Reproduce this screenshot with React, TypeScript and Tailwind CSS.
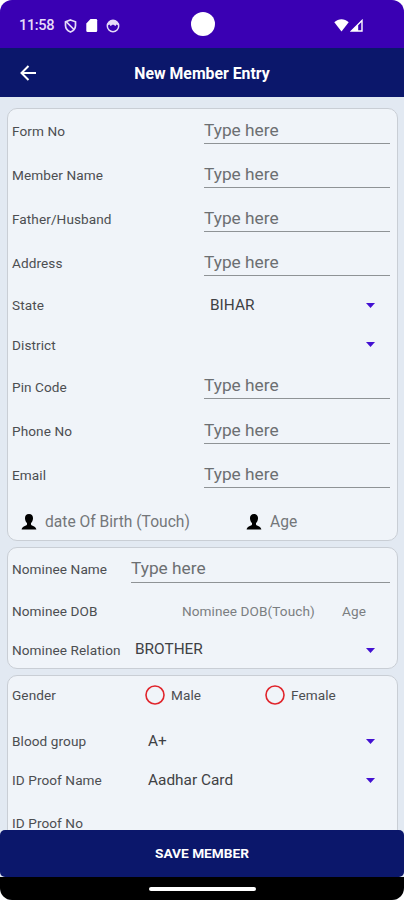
import type { ReactNode } from 'react';
import { clsx } from 'clsx';

const Card = ({ className, children }: { className?: string; children: ReactNode }) => (
  <section
    className={clsx(
      'ml-[7px] mr-[6px] shrink-0 rounded-[10px] border border-[#c9ced5] bg-[#f0f4f9] pl-1 pr-[7px]',
      className,
    )}
  >
    {children}
  </section>
);

const Label = ({
  className,
  muted,
  children,
}: {
  className?: string;
  muted?: boolean;
  children: ReactNode;
}) => (
  <span
    className={clsx(
      'shrink-0 whitespace-nowrap text-[13.6px] tracking-[0.08px]',
      muted ? 'text-[#7b7e81]' : 'text-[#4c4e51]',
      className,
    )}
  >
    {children}
  </span>
);

const Caret = () => (
  <svg className="mr-[15px] h-[5px] w-[9px] shrink-0" viewBox="0 0 9 5">
    <path d="M0 0h9L4.5 5z" fill="#4310d2" />
  </svg>
);

const TextRow = ({ label, wide }: { label: string; wide?: boolean }) => (
  <div className={clsx('flex items-center', wide ? 'h-[43px]' : 'h-[44.2px]')}>
    <Label className={wide ? 'w-[119px]' : 'w-[192px]'}>{label}</Label>
    <div
      className={clsx(
        'flex flex-1 items-center border-b border-[#8f9396] text-[17.3px] text-[#6c6f72]',
        wide ? 'h-[27px]' : 'h-[25px]',
      )}
    >
      Type here
    </div>
  </div>
);

const SelectRow = ({
  label,
  value,
  labelClass,
  className,
}: {
  label: string;
  value?: string;
  labelClass: string;
  className: string;
}) => (
  <div className={clsx('flex items-center', className)}>
    <Label className={labelClass}>{label}</Label>
    <span className="flex-1 text-[15.4px] text-[#3f4144]">{value}</span>
    <Caret />
  </div>
);

const PersonIcon = () => (
  <svg className="h-4 w-4 shrink-0" viewBox="0 0 16 16">
    <path
      d="M8 0C5.2 0 3.8 1.9 4 4.5c.1 1.9.8 3.500 2 4.500v1.400C5.700 11.900 1 12 .6 15.500h14.800C15 12 10.300 11.900 10 10.400V9c1.200-1 1.900-2.600 2-4.500C12.200 1.900 10.800 0 8 0z"
      fill="#000"
    />
  </svg>
);

const Radio = ({ label, className }: { label: string; className?: string }) => (
  <div className={clsx('flex items-center gap-[6px]', className)}>
    <svg className="h-5 w-5" viewBox="0 0 20 20">
      <circle cx="10" cy="10" r="9" fill="none" stroke="#e0242b" strokeWidth="1.6" />
    </svg>
    <Label>{label}</Label>
  </div>
);

const StatusBar = () => (
  <div className="relative flex h-12 shrink-0 items-center bg-[#3a00b3] pl-[19px] pr-[41px] pt-[3px] text-white">
    <span className="w-[45px] text-[14.6px] font-medium tracking-[-0.4px] text-[#e6dcf8]">11:58</span>
    {/* shield */}
    <svg className="h-[14px] w-[13px]" viewBox="0 0 13 14" fill="none" stroke="#e6dcf8" strokeWidth="1.7">
      <path d="M6.500 1L11.500 2.800v3.700c0 2.800-2 5.200-5 6.500-3-1.300-5-3.700-5-6.500V2.800z" />
      <path d="M2 2.500l8.500 8.500" />
    </svg>
    {/* sd card */}
    <svg className="ml-[9px] h-[13px] w-[12px]" viewBox="0 0 12 13">
      <path d="M4.500 0H10a1.200 1.200 0 0 1 1.200 1.200v10.600A1.200 1.200 0 0 1 10 13H1.500A1.200 1.200 0 0 1 .3 11.800V4.500z" fill="#fff" />
    </svg>
    {/* face */}
    <svg className="ml-[8px] h-[14px] w-[14px]" viewBox="0 0 14 14">
      <circle cx="7" cy="7" r="5.700" fill="none" stroke="#e6dcf8" strokeWidth="1.500" />
      <path d="M1.500 4.500L4 2h6l2.500 2.500v2L10.500 5.500 9.500 7 7 5.500 4.500 7 3.500 5.500 1.500 6.500z" fill="#e6dcf8" />
    </svg>
    <div className="absolute left-[191px] top-3 h-6 w-6 rounded-full bg-white" />
    <svg className="ml-auto h-[13px] w-[15px]" viewBox="0 0 15 13">
      <path d="M.3 3.200C4.500-.7 10.500-.7 14.700 3.200L7.500 12.500z" fill="#fff" />
    </svg>
    <svg className="ml-[1px] h-[13px] w-[13px]" viewBox="0 0 13 13" fill="none" stroke="#fff" strokeWidth="1.400">
      <path d="M12 1.500V12H1.500zM7.500 6v6" />
      <path d="M7.500 6L1.500 12h6z" fill="#fff" stroke="none" />
    </svg>
  </div>
);

export default function App() {
  return (
    <div className="h-[900px] w-[404px] overflow-hidden bg-white font-['Roboto',sans-serif]">
      <div className="flex h-full flex-col overflow-hidden rounded-[12px] bg-[#e2e9f2]">
        <StatusBar />

        <header className="relative flex h-[49px] shrink-0 items-center justify-center bg-[#0b176b] pt-[3px] text-white">
          <svg
            className="absolute left-5 top-[17px] h-4 w-4"
            viewBox="0 0 16 16"
            fill="none"
            stroke="#fff"
            strokeWidth="2"
          >
            <path d="M16 8H1.500M8.500 1L1.500 8l7 7" />
          </svg>
          <h1 className="text-[15.8px] font-bold">New Member Entry</h1>
        </header>

        <main className="flex min-h-0 flex-1 flex-col gap-[6px] overflow-hidden pt-[11px]">
          <Card className="h-[433px]">
            <TextRow label="Form No" />
            <TextRow label="Member Name" />
            <TextRow label="Father/Husband" />
            <TextRow label="Address" />
            <SelectRow label="State" value="BIHAR" labelClass="w-[198px]" className="h-[39px]" />
            <SelectRow label="District" labelClass="w-[198px]" className="h-[40px]" />
            <TextRow label="Pin Code" />
            <TextRow label="Phone No" />
            <TextRow label="Email" />
            <div className="flex h-[50px] items-center pl-[9px] text-[15.6px] text-[#74777a]">
              <PersonIcon />
              <span className="ml-2 w-[201px]">date Of Birth (Touch)</span>
              <PersonIcon />
              <span className="ml-2">Age</span>
            </div>
          </Card>

          <Card className="h-[122px]">
            <TextRow label="Nominee Name" wide />
            <div className="flex h-10 items-center">
              <Label className="w-[170px]">Nominee DOB</Label>
              <Label className="w-[160px]" muted>
                Nominee DOB(Touch)
              </Label>
              <Label muted>Age</Label>
            </div>
            <SelectRow
              label="Nominee Relation"
              value="BROTHER"
              labelClass="w-[123px]"
              className="h-[38px]"
            />
          </Card>

          <Card className="h-[180px]">
            <div className="flex h-[38px] items-center">
              <Label className="w-[133px]">Gender</Label>
              <Radio label="Male" className="w-[120px]" />
              <Radio label="Female" />
            </div>
            <SelectRow label="Blood group" value="A+" labelClass="w-[136px]" className="mt-2 h-[39px]" />
            <SelectRow
              label="ID Proof Name"
              value="Aadhar Card"
              labelClass="w-[136px]"
              className="h-[39px]"
            />
            <div className="flex h-[47px] items-center">
              <Label>ID Proof No</Label>
            </div>
          </Card>
        </main>

        <button className="h-[47px] shrink-0 rounded-[5px] bg-[#0b176b] text-[13.7px] font-bold text-white">
          SAVE MEMBER
        </button>
        <div className="flex h-[23px] shrink-0 items-center justify-center bg-black">
          <div className="h-[4px] w-[107px] rounded-full bg-white" />
        </div>
      </div>
    </div>
  );
}
